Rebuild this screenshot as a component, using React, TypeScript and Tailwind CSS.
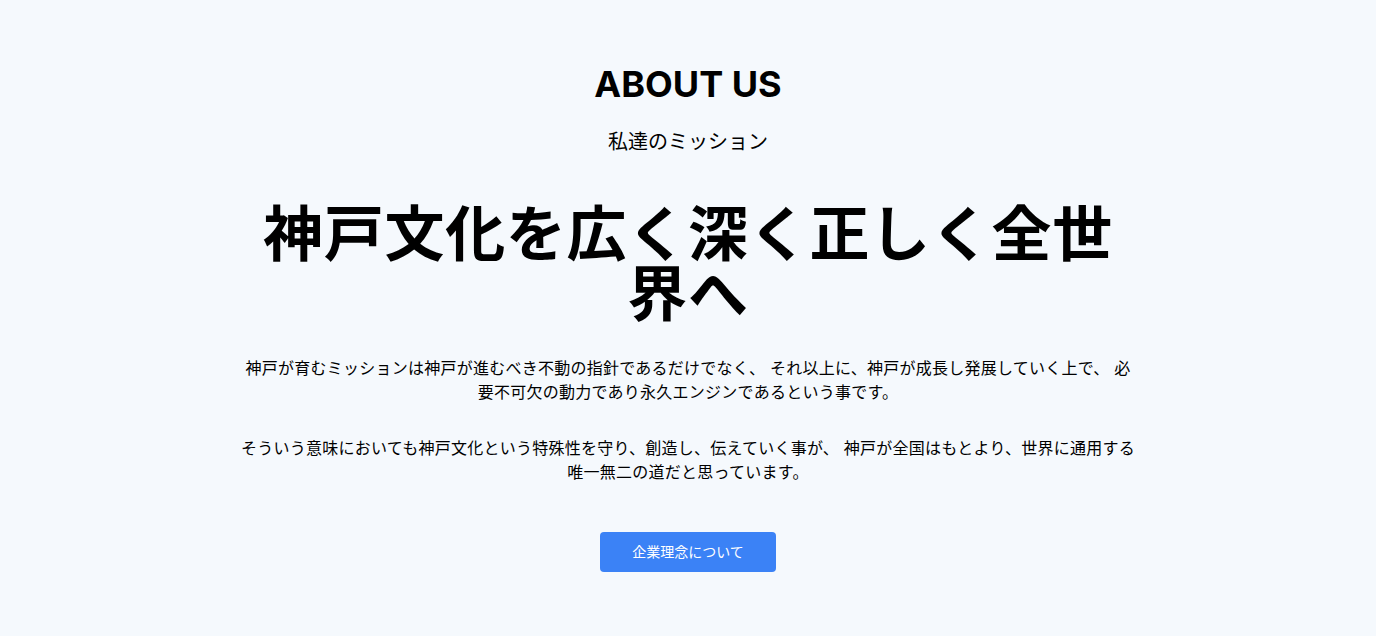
export default function App() {
  return (
    <div className="min-h-screen bg-[#f5f9fd] text-black [font-family:Inter,'Noto_Sans_CJK_JP',sans-serif]">
      <section className="flex flex-col items-center px-4 pt-16 pb-16 text-center">
        <h2 className="text-4xl font-bold mb-6">ABOUT US</h2>
        <p className="text-xl mb-12">私達のミッション</p>

        <h1 className="max-w-4xl text-6xl font-bold leading-none tracking-[0.7px] mb-8">
          神戸文化を広く深く正しく全世界へ
        </h1>

        <p className="max-w-4xl text-base leading-6 tracking-[0.25px] mb-8">
          神戸が育むミッションは神戸が進むべき不動の指針であるだけでなく、 それ以上に、神戸が成長し発展していく上で、 必要不可欠の動力であり永久エンジンであるという事です。
        </p>
        <p className="max-w-4xl text-base leading-6 tracking-[0.25px] mb-12">
          そういう意味においても神戸文化という特殊性を守り、創造し、伝えていく事が、 神戸が全国はもとより、世界に通用する唯一無二の道だと思っています。
        </p>

        <button
          type="button"
          className="bg-[#3b82f6] text-white text-sm px-8 py-2.5 rounded hover:bg-blue-600"
        >
          企業理念について
        </button>
      </section>
    </div>
  );
}
